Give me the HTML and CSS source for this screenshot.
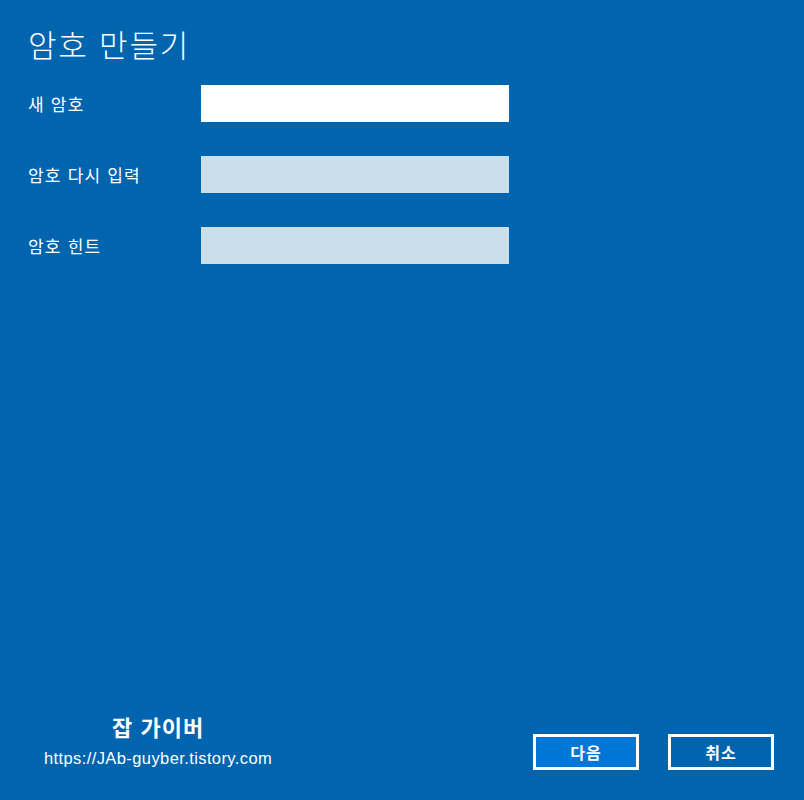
FILE: index.html
```html
<!DOCTYPE html>
<html lang="ko">
<head>
  <meta charset="UTF-8">
  <meta name="viewport" content="width=device-width, initial-scale=1.0">
  <title>암호 만들기</title>
  <link rel="stylesheet" href="styles.css">
</head>
<body>
  <main>
    <h1 class="title">암호 만들기</h1>
    <div class="form">
      <div class="row">
        <label class="lbl">새 암호</label>
        <div class="field active"></div>
      </div>
      <div class="row">
        <label class="lbl">암호 다시 입력</label>
        <div class="field"></div>
      </div>
      <div class="row">
        <label class="lbl">암호 힌트</label>
        <div class="field"></div>
      </div>
    </div>

    <div class="bottom">
      <div class="mark">
        <div class="mark-name">잡 가이버</div>
        <div class="mark-url">https://JAb-guyber.tistory.com</div>
      </div>
      <div class="buttons">
        <button class="btn primary">다음</button>
        <button class="btn">취소</button>
      </div>
    </div>
  </main>
</body>
</html>
```

FILE: styles.css
```css
* {
  margin: 0;
  padding: 0;
  box-sizing: border-box;
}
body {
  background-color: #0064af;
  font-family: "Noto Sans CJK KR", "Noto Sans", sans-serif;
  color: white;
}
main {
  width: 804px;
  height: 800px;
  padding: 22px 0 0 28px;
  display: flex;
  flex-direction: column;
}
.title {
  font-size: 31px;
  font-weight: 300;
  line-height: 44px;
  letter-spacing: 1.8px;
}
.form {
  margin-top: 19px;
  display: flex;
  flex-direction: column;
  gap: 34px;
}
.row {
  display: flex;
  align-items: center;
  height: 37px;
}
.lbl {
  width: 173px;
  font-size: 17px;
  letter-spacing: 1.2px;
}
.field {
  width: 308px;
  height: 37px;
  background-color: #c9dfec;
}
.field.active {
  background-color: #ffffff;
}
.bottom {
  margin-top: auto;
  display: flex;
  justify-content: space-between;
  align-items: flex-end;
  padding: 0 30px 30px 16px;
}
.mark {
  display: flex;
  flex-direction: column;
  align-items: center;
  padding-bottom: 2px;
}
.mark-name {
  font-size: 22px;
  font-weight: bold;
  line-height: 28px;
  letter-spacing: 1px;
}
.mark-url {
  margin-top: 8px;
  font-family: "Liberation Sans", sans-serif;
  font-size: 16.5px;
  line-height: 20px;
  letter-spacing: 0.4px;
}
.buttons {
  display: flex;
  gap: 29px;
}
.btn {
  width: 106px;
  height: 36px;
  border: 3px solid white;
  background-color: #0064af;
  color: white;
  font-family: "Noto Sans CJK KR", sans-serif;
  font-size: 16px;
  font-weight: bold;
  letter-spacing: 1px;
}
.btn.primary {
  background-color: #0077d6;
}
```
